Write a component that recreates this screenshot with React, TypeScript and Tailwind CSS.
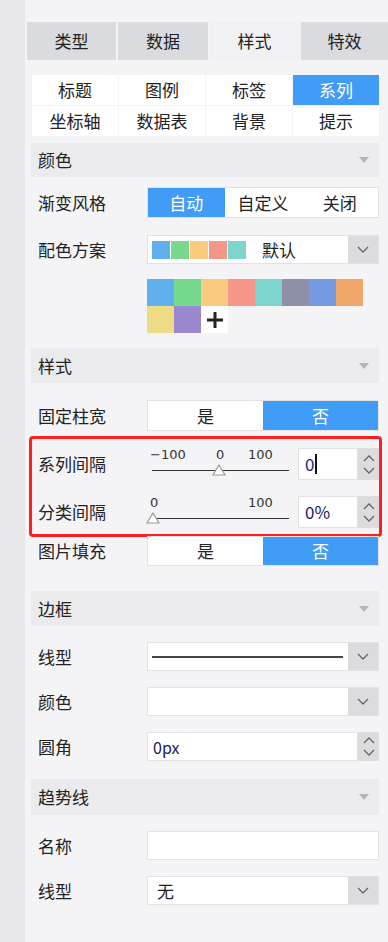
import React from "react";

const FONT = { fontFamily: '"Noto Sans CJK SC", "Noto Sans", sans-serif' };

function Tri() {
  return (
    <svg width="10" height="6" viewBox="0 0 10 6" className="mr-[10px]">
      <polygon points="0,0 10,0 5,6" fill="#b5b5b8" />
    </svg>
  );
}

function Header({ title, h = "h-[35px]" }: { title: string; h?: string }) {
  return (
    <div className={`${h} bg-[#ebebed] flex items-center justify-between pl-[7px] text-[17px] text-[#222]`}>
      <span>{title}</span>
      <Tri />
    </div>
  );
}

function Chevron({ up = false }: { up?: boolean }) {
  return (
    <svg width="12" height="7" viewBox="0 0 12 7">
      <polyline
        points={up ? "1,6 6,1 11,6" : "1,1 6,6 11,1"}
        fill="none"
        stroke="#666"
        strokeWidth="1.3"
      />
    </svg>
  );
}

function Row({ label, children, h = "h-[29px]", cls = "" }: { label: string; children: React.ReactNode; h?: string; cls?: string }) {
  return (
    <div className={`flex items-center ${h} ${cls}`}>
      <div className="w-[116px] pl-[7px] text-[17px] text-[#222] shrink-0">{label}</div>
      <div className="flex-1 h-full">{children}</div>
    </div>
  );
}

function Select({ children }: { children?: React.ReactNode }) {
  return (
    <div className="flex h-full border border-[#e2e2e4] bg-white">
      <div className="flex-1 flex items-center">{children}</div>
      <div className="w-[30px] bg-[#dcdcde] flex items-center justify-center">
        <Chevron />
      </div>
    </div>
  );
}

function Spinner() {
  return (
    <div className="w-[21px] bg-[#dcdcde] flex flex-col items-center justify-center gap-[5px]">
      <Chevron up />
      <Chevron />
    </div>
  );
}

function Seg({ items, active }: { items: string[]; active: number }) {
  return (
    <div className="flex h-full border border-[#e2e2e4] bg-white">
      {items.map((t, i) => (
        <div
          key={t}
          className={`flex-1 flex items-center justify-center text-[17px] ${i === active ? "bg-[#409cf6] text-white" : "text-[#222]"}`}
        >
          {t}
        </div>
      ))}
    </div>
  );
}

function Slider({ labels, thumb }: { labels: { t: string; x: number }[]; thumb: number }) {
  return (
    <div className="relative w-[145px] h-[40px]" style={{ fontFamily: '"DejaVu Sans", sans-serif' }}>
      {labels.map((l) => (
        <span key={l.t} className="absolute top-[2px] text-[13px] leading-none text-[#333]" style={{ left: l.x }}>
          {l.t}
        </span>
      ))}
      <div className="absolute left-[5px] right-[3px] top-[24px] h-[1px] bg-[#333]" />
      <svg className="absolute top-[18px]" style={{ left: thumb - 7 }} width="14" height="12" viewBox="0 0 14 12">
        <polygon points="7,1 13,11 1,11" fill="#fff" stroke="#999" strokeWidth="1.2" />
      </svg>
    </div>
  );
}

export default function App() {
  const palette = ["#5fb0ec", "#77d98e", "#f8cb7e", "#f69689", "#7ed5cd", "#8e8fa8", "#7599e0", "#f0a76a", "#eddc85", "#9a88cf"];
  return (
    <div className="w-[388px] h-[942px] flex bg-[#f4f4f6] overflow-hidden" style={FONT}>
      <div className="w-[25px] bg-[#e8e8ea] shrink-0" />
      <div className="flex-1 flex flex-col pl-[2px]">
        {/* Top tabs */}
        <div className="mt-[22px] flex h-[38px] text-[17px] text-[#222]">
          <div className="w-[89px] bg-[#dadbde] flex items-center justify-center">类型</div>
          <div className="w-[90px] ml-[2px] bg-[#dadbde] flex items-center justify-center">数据</div>
          <div className="w-[91px] ml-[1px] bg-[#f1f1f3] flex items-center justify-center">样式</div>
          <div className="flex-1 ml-[1px] bg-[#dadbde] flex items-center justify-center">特效</div>
        </div>
        <div className="w-[348px] ml-[4px] flex flex-col">
          {/* Sub tabs */}
          <div className="mt-[15px] ml-[1px] grid grid-cols-4 gap-x-[1px] gap-y-[1px] text-[17px] text-[#222]">
            {["标题", "图例", "标签", "系列", "坐标轴", "数据表", "背景", "提示"].map((t) => (
              <div
                key={t}
                className={`h-[30px] flex items-center justify-center ${t === "系列" ? "bg-[#409cf6] text-white" : "bg-white"}`}
              >
                {t}
              </div>
            ))}
          </div>

          {/* 颜色 */}
          <div className="mt-[7px]">
            <Header title="颜色" h="h-[34px]" />
          </div>
          <Row label="渐变风格" h="h-[31px]" cls="mt-[10px]">
            <Seg items={["自动", "自定义", "关闭"]} active={0} />
          </Row>
          <Row label="配色方案" h="h-[29px]" cls="mt-[17px]">
            <Select>
              <div className="flex items-center pl-[4px] gap-[1px]">
                {palette.slice(0, 5).map((c) => (
                  <div key={c} className="w-[18px] h-[18px]" style={{ background: c }} />
                ))}
              </div>
              <span className="ml-[16px] text-[17px] text-[#222]">默认</span>
            </Select>
          </Row>
          <div className="mt-[15px] ml-[116px] grid grid-cols-[repeat(8,27px)] grid-rows-[27px_27px]">
            {palette.map((c) => (
              <div key={c} style={{ background: c }} />
            ))}
            <div className="bg-white flex items-center justify-center">
              <svg width="18" height="18" viewBox="0 0 18 18">
                <rect x="7.5" y="1" width="3" height="16" fill="#222" />
                <rect x="1" y="7.5" width="16" height="3" fill="#222" />
              </svg>
            </div>
          </div>

          {/* 样式 */}
          <div className="mt-[15px]">
            <Header title="样式" />
          </div>
          <Row label="固定柱宽" h="h-[31px]" cls="mt-[17px]">
            <Seg items={["是", "否"]} active={1} />
          </Row>
          <div className="mt-[5px] -ml-[2px] -mr-[3px] h-[101px] border-[3px] border-[#ff1f1f] rounded-[4px] flex flex-col">
            <div className="flex items-center h-[32px] mt-[9px]">
              <div className="w-[115px] pl-[6px] text-[17px] text-[#222] shrink-0">系列间隔</div>
              <div className="mt-[4px]">
                <Slider labels={[{ t: "−100", x: 3 }, { t: "0", x: 69 }, { t: "100", x: 101 }]} thumb={72} />
              </div>
              <div className="ml-[6px] flex h-full">
                <div className="w-[60px] bg-white border border-[#e2e2e4] flex items-center pl-[6px] text-[17px] text-[#1a1a8a]">
                  0<span className="inline-block w-[1.5px] h-[20px] bg-[#111] ml-[1px]" />
                </div>
                <Spinner />
              </div>
            </div>
            <div className="flex items-center h-[32px] mt-[16px]">
              <div className="w-[115px] pl-[6px] text-[17px] text-[#222] shrink-0">分类间隔</div>
              <div className="mt-[4px]">
                <Slider labels={[{ t: "0", x: 3 }, { t: "100", x: 101 }]} thumb={6} />
              </div>
              <div className="ml-[6px] flex h-full">
                <div className="w-[60px] bg-white border border-[#e2e2e4] flex items-center pl-[6px] text-[17px] text-[#1a1a5a]">
                  0%
                </div>
                <Spinner />
              </div>
            </div>
          </div>
          <Row label="图片填充" h="h-[30px]" cls="-mt-[1px]">
            <Seg items={["是", "否"]} active={1} />
          </Row>

          {/* 边框 */}
          <div className="mt-[25px]">
            <Header title="边框" />
          </div>
          <Row label="线型" cls="mt-[16px]">
            <Select>
              <div className="ml-[4px] w-[191px] h-[2px] bg-[#444]" />
            </Select>
          </Row>
          <Row label="颜色" cls="mt-[16px]">
            <Select />
          </Row>
          <Row label="圆角" cls="mt-[16px]">
            <div className="flex h-full">
              <div className="flex-1 bg-white border border-[#e2e2e4] flex items-center pl-[5px] text-[16px] text-[#1a1a5a]">
                0px
              </div>
              <Spinner />
            </div>
          </Row>

          {/* 趋势线 */}
          <div className="mt-[18px]">
            <Header title="趋势线" h="h-[36px]" />
          </div>
          <Row label="名称" cls="mt-[16px]">
            <div className="h-full bg-white border border-[#e2e2e4]" />
          </Row>
          <Row label="线型" cls="mt-[16px]">
            <Select>
              <span className="ml-[9px] text-[17px] text-[#222]">无</span>
            </Select>
          </Row>
        </div>
      </div>
    </div>
  );
}
